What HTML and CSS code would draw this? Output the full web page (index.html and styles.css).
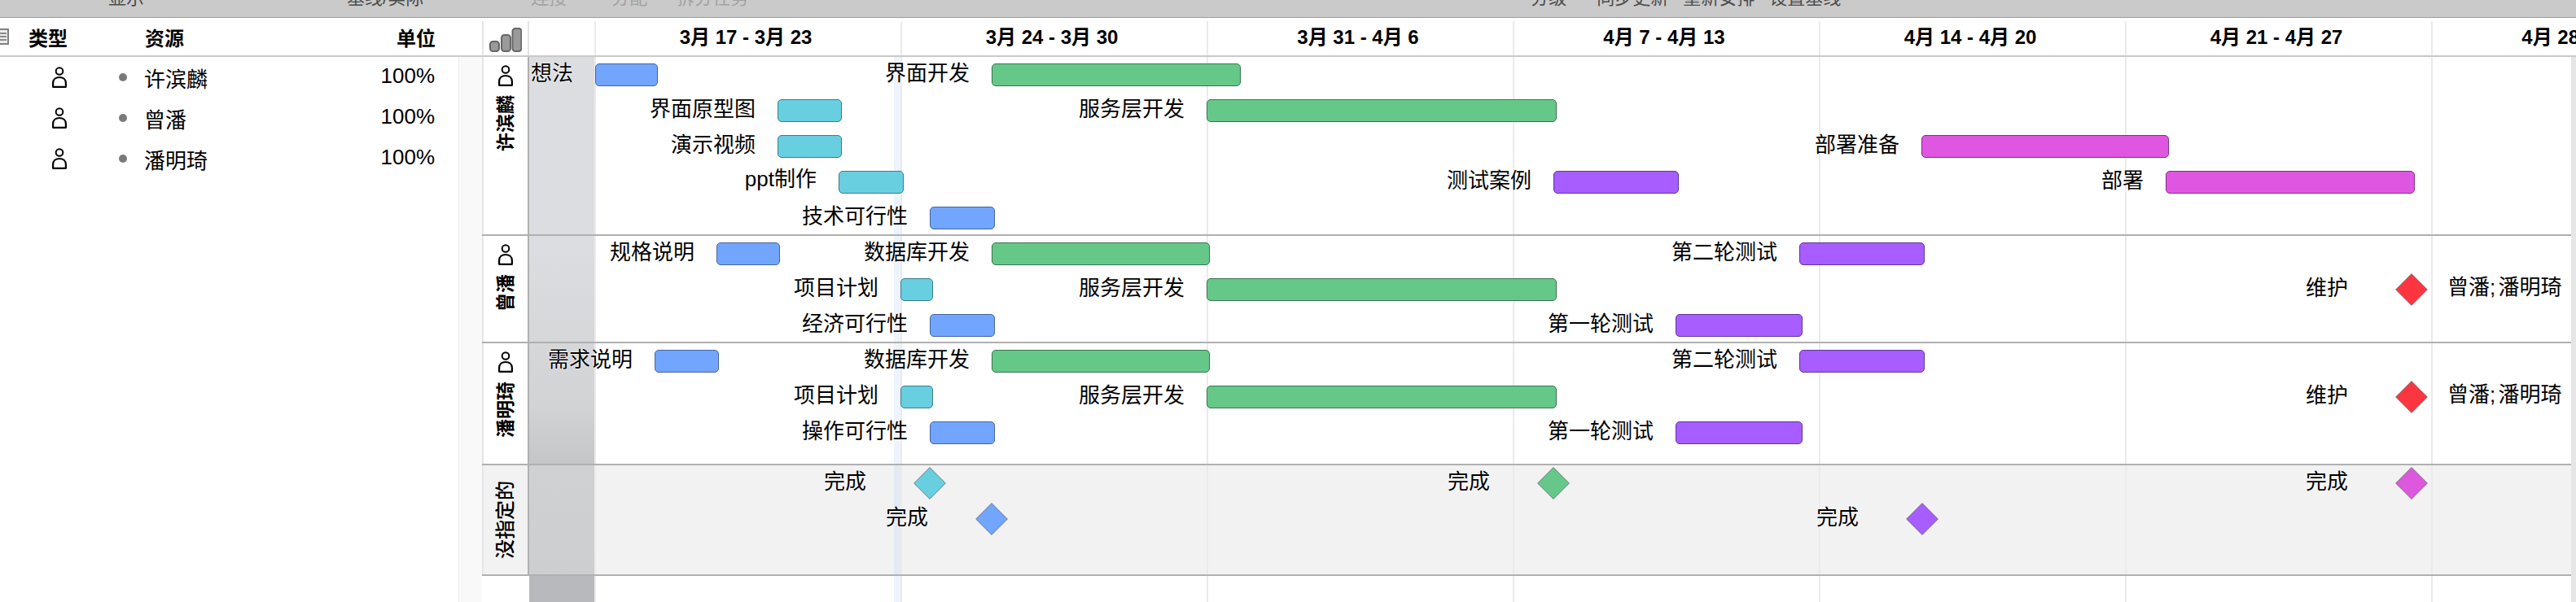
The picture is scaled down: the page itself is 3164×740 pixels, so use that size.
FILE: index.html
```html
<!DOCTYPE html>
<html lang="zh-CN">
<head>
<meta charset="utf-8">
<title>资源甘特图</title>
<link rel="stylesheet" href="styles.css">
</head>
<body>
<svg class="defs" width="0" height="0" aria-hidden="true">
  <symbol id="person" viewBox="0 0 18 26">
    <circle cx="9" cy="5.5" r="4.3" fill="none" stroke="currentColor" stroke-width="2"/>
    <path d="M1.1 24.8V20.2C1.1 15.6 4.6 13 9 13s7.9 2.6 7.9 7.2v4.6z" fill="none" stroke="currentColor" stroke-width="2.2" stroke-linejoin="round"/>
  </symbol>
  <symbol id="gem" viewBox="0 0 40 40">
    <polygon points="20,0.6 39.4,20 20,39.4 0.6,20"/>
  </symbol>
</svg>

<header class="toolbar">
  <span class="tool tool-show">显示</span>
  <span class="tool tool-base">基线/实际</span>
  <span class="tool off tool-link">连接</span>
  <span class="tool off tool-assign">分配</span>
  <span class="tool off tool-split">拆分任务</span>
  <span class="tool tool-level">分级</span>
  <span class="tool tool-sync">同步更新</span>
  <span class="tool tool-tight">重新安排</span>
  <span class="tool tool-tight">设置基线</span>
</header>

<main class="main">
  <section class="resources">
    <div class="res-head">
      <svg class="doc-icon" width="11" height="20" viewBox="0 0 11 20" aria-hidden="true">
        <rect x="-8" y="1" width="18" height="18" fill="#ececec" stroke="#808080" stroke-width="2"/>
        <path d="M0 6h8M0 10h8M0 14h8" stroke="#8a8a8a" stroke-width="2"/>
      </svg>
      <span class="col-type">类型</span>
      <span class="col-name">资源</span>
      <span class="col-unit">单位</span>
    </div>
    <div class="res-body">
      <div class="res-list">
        <div class="res-row"><svg class="person"><use href="#person"/></svg><i class="dot"></i><span class="res-name">许滨麟</span><span class="res-unit">100%</span></div>
        <div class="res-row"><svg class="person"><use href="#person"/></svg><i class="dot"></i><span class="res-name">曾潘</span><span class="res-unit">100%</span></div>
        <div class="res-row"><svg class="person"><use href="#person"/></svg><i class="dot"></i><span class="res-name">潘明琦</span><span class="res-unit">100%</span></div>
      </div>
      <div class="res-gutter"></div>
    </div>
  </section>

  <section class="gantt">
    <div class="gantt-head">
      <div class="level-cell">
        <svg width="40" height="30" viewBox="0 0 40 30" aria-hidden="true">
          <rect x="1" y="17" width="11" height="12" rx="3.5" class="lvl"/>
          <rect x="15" y="9" width="11" height="20" rx="3.5" class="lvl"/>
          <rect x="28.500" y="1" width="11" height="28" rx="3.5" class="lvl"/>
        </svg>
      </div>
      <div class="head-gap"></div>
      <div class="week">3月 17 - 3月 23</div>
      <div class="week">3月 24 - 3月 30</div>
      <div class="week">3月 31 - 4月 6</div>
      <div class="week">4月 7 - 4月 13</div>
      <div class="week">4月 14 - 4月 20</div>
      <div class="week">4月 21 - 4月 27</div>
      <div class="week">4月 28 - 5月 4</div>
    </div>

    <div class="gantt-body">
      <div class="backdrop">
        <div class="unassigned-bg"></div>
        <div class="band"></div>
        <div class="today"></div>
        <div class="week-lines"></div>
      </div>

      <div class="group g1">
        <div class="group-label"><svg class="person big"><use href="#person"/></svg><span class="vtext">许滨麟</span></div>
        <div class="canvas">
          <div class="row">
            <div class="bar blue" style="left:81px;width:77px"><span class="label">想法</span></div>
            <div class="bar green" style="left:568px;width:306px"><span class="label">界面开发</span></div>
          </div>
          <div class="row">
            <div class="bar cyan" style="left:305px;width:79px"><span class="label">界面原型图</span></div>
            <div class="bar green" style="left:832px;width:430px"><span class="label">服务层开发</span></div>
          </div>
          <div class="row">
            <div class="bar cyan" style="left:305px;width:79px"><span class="label">演示视频</span></div>
            <div class="bar magenta" style="left:1710px;width:304px"><span class="label">部署准备</span></div>
          </div>
          <div class="row">
            <div class="bar cyan" style="left:380px;width:80px"><span class="label raised">ppt制作</span></div>
            <div class="bar purple" style="left:1258px;width:154px"><span class="label">测试案例</span></div>
            <div class="bar magenta" style="left:2010px;width:306px"><span class="label">部署</span></div>
          </div>
          <div class="row">
            <div class="bar blue" style="left:492px;width:80px"><span class="label">技术可行性</span></div>
          </div>
        </div>
      </div>

      <div class="group g2">
        <div class="group-label"><svg class="person big"><use href="#person"/></svg><span class="vtext">曾潘</span></div>
        <div class="canvas">
          <div class="row">
            <div class="bar blue" style="left:230px;width:78px"><span class="label">规格说明</span></div>
            <div class="bar green" style="left:568px;width:268px"><span class="label">数据库开发</span></div>
            <div class="bar purple" style="left:1560px;width:154px"><span class="label">第二轮测试</span></div>
          </div>
          <div class="row">
            <div class="bar cyan" style="left:456px;width:40px"><span class="label">项目计划</span></div>
            <div class="bar green" style="left:832px;width:430px"><span class="label">服务层开发</span></div>
            <div class="gem red" style="left:2292px"><svg><use href="#gem"/></svg><span class="label">维护</span><span class="who">曾潘; 潘明琦</span></div>
          </div>
          <div class="row">
            <div class="bar blue" style="left:492px;width:80px"><span class="label">经济可行性</span></div>
            <div class="bar purple" style="left:1408px;width:156px"><span class="label">第一轮测试</span></div>
          </div>
        </div>
      </div>

      <div class="group g3">
        <div class="group-label"><svg class="person big"><use href="#person"/></svg><span class="vtext">潘明琦</span></div>
        <div class="canvas">
          <div class="row">
            <div class="bar blue" style="left:154px;width:79px"><span class="label">需求说明</span></div>
            <div class="bar green" style="left:568px;width:268px"><span class="label">数据库开发</span></div>
            <div class="bar purple" style="left:1560px;width:154px"><span class="label">第二轮测试</span></div>
          </div>
          <div class="row">
            <div class="bar cyan" style="left:456px;width:40px"><span class="label">项目计划</span></div>
            <div class="bar green" style="left:832px;width:430px"><span class="label">服务层开发</span></div>
            <div class="gem red" style="left:2292px"><svg><use href="#gem"/></svg><span class="label">维护</span><span class="who">曾潘; 潘明琦</span></div>
          </div>
          <div class="row">
            <div class="bar blue" style="left:492px;width:80px"><span class="label">操作可行性</span></div>
            <div class="bar purple" style="left:1408px;width:156px"><span class="label">第一轮测试</span></div>
          </div>
        </div>
      </div>

      <div class="group g4">
        <div class="group-label center"><span class="vtext plain">没指定的</span></div>
        <div class="canvas">
          <div class="row">
            <div class="gem cyan" style="left:472px"><svg><use href="#gem"/></svg><span class="label">完成</span></div>
            <div class="gem green" style="left:1238px"><svg><use href="#gem"/></svg><span class="label">完成</span></div>
            <div class="gem magenta" style="left:2292px"><svg><use href="#gem"/></svg><span class="label">完成</span></div>
          </div>
          <div class="row">
            <div class="gem blue" style="left:548px"><svg><use href="#gem"/></svg><span class="label">完成</span></div>
            <div class="gem purple" style="left:1691px"><svg><use href="#gem"/></svg><span class="label">完成</span></div>
          </div>
        </div>
      </div>
    </div>
  </section>
</main>
</body>
</html>
```

FILE: styles.css
```css
* { box-sizing: border-box; }

html, body {
  margin: 0;
  height: 740px;
  overflow: hidden;
  background: #fff;
  color: #000;
  font-family: "Liberation Sans", "Noto Sans CJK SC", sans-serif;
  font-size: 26px;
}

body { display: flex; flex-direction: column; width: 3164px; }

.defs { position: absolute; }

/* Toolbar, cut off at the top of the shot */
.toolbar {
  flex: none;
  height: 22px;
  display: flex;
  overflow: hidden;
  background: #cacaca;
  border-bottom: 1px solid #9c9c9c;
  padding-left: 133px;
}
.tool {
  flex: none;
  margin-top: -18px;
  height: 32px;
  line-height: 32px;
  font-size: 22px;
  color: #4c4c4c;
}
.tool.off { color: #a2a2a2; }
.tool-base { margin-left: 249px; }
.tool-link { margin-left: 132px; }
.tool-assign { margin-left: 55px; }
.tool-split { margin-left: 36px; }
.tool-level { margin-left: 961px; }
.tool-sync { margin-left: 37px; }
.tool-tight { margin-left: 18px; }

.main { flex: 1; display: flex; min-height: 0; }

/* Resource table */
.resources { flex: none; width: 592px; display: flex; flex-direction: column; }
.res-head {
  flex: none;
  height: 48px;
  display: flex;
  align-items: center;
  border-bottom: 2px solid #c9c9c9;
  font-size: 24px;
  font-weight: 700;
}
.doc-icon { flex: none; }
.col-type { width: 143px; margin-left: 24px; }
.col-unit { margin-left: auto; margin-right: 57px; }
.res-body { flex: 1; display: flex; }
.res-list { flex: 1; }
.res-gutter { flex: none; width: 29px; background: #f9f9f9; border-left: 1px solid #ececec; }
.res-row { height: 50px; display: flex; align-items: center; padding: 0 29px 0 64px; }
.person { display: block; flex: none; width: 18px; height: 26px; }
.dot { flex: none; width: 10px; height: 10px; margin-left: 64px; border-radius: 50%; background: #7a7a7a; }
.res-name { margin-left: 21px; }
.res-unit { margin-left: auto; padding-bottom: 4px; }

/* Gantt */
.gantt { flex: 1; min-width: 0; display: flex; flex-direction: column; overflow: hidden; }
.gantt-head {
  flex: none;
  height: 48px;
  display: flex;
  padding-top: 4px;
  border-bottom: 2px solid #c9c9c9;
}
.level-cell {
  flex: none;
  width: 58px;
  padding: 8px 0 0 7px;
  border-left: 2px solid #e6e6e6;
  border-right: 2px solid #e4e4e4;
}
.level-cell svg { display: block; }
.lvl { fill: #9a9a9a; stroke: #666; stroke-width: 2; }
.head-gap { flex: none; width: 80px; }
.week {
  flex: none;
  width: 376px;
  border-left: 2px solid #ebebeb;
  padding-right: 6px;
  text-align: center;
  font-size: 24px;
  font-weight: 700;
  line-height: 40px;
  white-space: nowrap;
}

.gantt-body { flex: 1; position: relative; margin-right: 6px; }
.gantt-body::after {
  content: "";
  position: absolute;
  top: 0;
  bottom: 0;
  right: -6px;
  width: 6px;
  background: #e6e6e6;
}

.backdrop { position: absolute; inset: 0; }
.unassigned-bg { position: absolute; left: 0; right: 0; top: 502px; height: 134px; background: #f2f2f2; }
.band {
  position: absolute;
  left: 58px;
  width: 81px;
  top: 0;
  bottom: 0;
  background: linear-gradient(180deg,
    #dcdde0 0, #dcdde0 230px, #d2d3d5 430px, #c5c6c8 500px,
    #d0d1d3 500px, #cdced0 636px, #b8b9bc 636px, #b8b9bc 100%);
}
.today { position: absolute; left: 506px; width: 10px; top: 0; bottom: 0; background: rgba(180, 210, 245, .24); }
.week-lines {
  position: absolute;
  left: 138px;
  right: 0;
  top: 0;
  bottom: 0;
  background: repeating-linear-gradient(90deg, #ebebeb 0, #ebebeb 2px, transparent 2px, transparent 376px);
}

.group { position: relative; display: flex; border-bottom: 2px solid #b0b0b0; }
.g1 { height: 220px; }
.g2 { height: 132px; }
.g3 { height: 150px; }
.g4 { height: 136px; }

.group-label {
  flex: none;
  width: 58px;
  display: flex;
  flex-direction: column;
  align-items: center;
  gap: 11px;
  padding-top: 10px;
  border-left: 2px solid #e6e6e6;
  border-right: 2px solid #b0b0b0;
  background: #fff;
}
.g4 .group-label { background: #f2f2f2; }
.group-label.center { justify-content: center; padding-top: 0; }
.person.big { width: 20px; height: 26px; }
.vtext {
  writing-mode: vertical-rl;
  text-orientation: sideways;
  transform: rotate(180deg);
  font-size: 23px;
  line-height: 26px;
  font-weight: 700;
}
.vtext.plain { font-weight: 500; font-size: 24px; }

.canvas { position: relative; flex: 1; min-width: 0; }
.row { position: relative; height: 44px; }

.bar {
  position: absolute;
  top: 8px;
  height: 28px;
  border: 1px solid;
  border-radius: 5px;
}
.label {
  position: absolute;
  right: calc(100% + 28px);
  top: 50%;
  transform: translateY(-50%);
  margin-top: -2px;
  line-height: 32px;
  white-space: nowrap;
  text-shadow: 0 0 2px #fff, 0 0 2px #fff;
}
.label.raised { margin-top: -4px; }
.bar.blue { background: #72a5fd; border-color: #45659f; }
.bar.cyan { background: #67cfe0; border-color: #3d7c89; }
.bar.green { background: #66c888; border-color: #37744f; }
.bar.purple { background: #a75dff; border-color: #5f3693; }
.bar.magenta { background: #df57e0; border-color: #7f3087; }

.gem { position: absolute; top: 2px; width: 40px; height: 40px; }
.gem svg { display: block; width: 40px; height: 40px; stroke: #66666e; stroke-width: .8; }
.gem .label { right: calc(100% + 58px); }
.gem .who {
  position: absolute;
  left: calc(100% + 24px);
  top: 50%;
  transform: translateY(-50%);
  margin-top: -3px;
  line-height: 32px;
  white-space: nowrap;
  word-spacing: -4px;
}
.gem.red svg { fill: #fb3640; }
.gem.cyan svg { fill: #67cfe0; }
.gem.blue svg { fill: #72a5fd; }
.gem.green svg { fill: #66c888; }
.gem.purple svg { fill: #a75dff; }
.gem.magenta svg { fill: #dd58dd; }
```
